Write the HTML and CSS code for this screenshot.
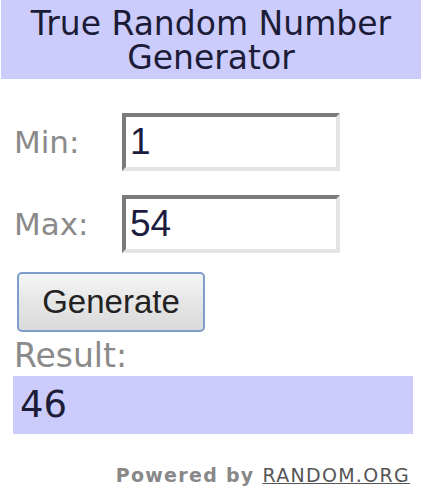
FILE: index.html
```html
<!DOCTYPE html>
<html>
<head>
<meta charset="utf-8">
<link rel="stylesheet" href="styles.css">
</head>
<body>
<div class="widget">
  <div class="header">True Random Number<br>Generator</div>
  <div class="form">
    <div class="row">
      <span class="label">Min:</span>
      <div class="field">1</div>
    </div>
    <div class="row">
      <span class="label">Max:</span>
      <div class="field">54</div>
    </div>
    <button class="btn">Generate</button>
    <div class="result-label">Result:</div>
    <div class="result">46</div>
    <div class="powered">Powered by <span class="link">RANDOM.ORG</span></div>
  </div>
</div>
</body>
</html>
```

FILE: styles.css
```css
html, body {
  margin: 0;
  padding: 0;
  background: #ffffff;
}
.widget {
  width: 423px;
  height: 500px;
  font-family: "DejaVu Sans", Verdana, sans-serif;
}
.header {
  margin: 0 2px 0 1px;
  background: #ccccfc;
  color: #1c1c38;
  font-size: 33px;
  line-height: 34px;
  text-align: center;
  padding: 7px 0 4px;
}
.form {
  padding: 34px 0 0 14px;
  display: flex;
  flex-direction: column;
  align-items: flex-start;
}
.row {
  display: flex;
  align-items: center;
  margin-bottom: 24px;
}
.row:nth-child(2) {
  margin-bottom: 19px;
}
.label {
  width: 108px;
  font-size: 31px;
  color: #8a8a8a;
}
.field {
  box-sizing: border-box;
  width: 218px;
  height: 58px;
  border-style: solid;
  border-width: 4px;
  border-color: #7a7a7a #e4e4e4 #e4e4e4 #7a7a7a;
  background: #fff;
  font-family: "Liberation Sans", Arial, sans-serif;
  font-size: 37px;
  line-height: 50px;
  padding-left: 4px;
  color: #1c1c40;
}
.btn {
  box-sizing: border-box;
  margin-left: 3px;
  width: 188px;
  height: 60px;
  border: 2px solid #7f9dc9;
  border-radius: 5px;
  background: linear-gradient(#f5f5f5, #e6e6e6 50%, #dadada);
  font-family: "Liberation Sans", Arial, sans-serif;
  font-size: 33px;
  color: #222;
  padding: 0;
}
.result-label {
  margin-top: 4px;
  font-size: 33px;
  line-height: 40px;
  color: #8a8a8a;
}
.result {
  box-sizing: border-box;
  margin-left: -1px;
  width: 400px;
  height: 58px;
  background: #ccccfc;
  font-size: 37px;
  line-height: 58px;
  padding-left: 7px;
  color: #1c1c38;
}
.powered {
  align-self: flex-end;
  margin-right: 13px;
  margin-top: 30px;
  font-size: 19px;
  letter-spacing: 1.3px;
  color: #888;
  font-weight: bold;
}
.link {
  font-weight: normal;
  color: #555;
  text-decoration: underline;
}
```
